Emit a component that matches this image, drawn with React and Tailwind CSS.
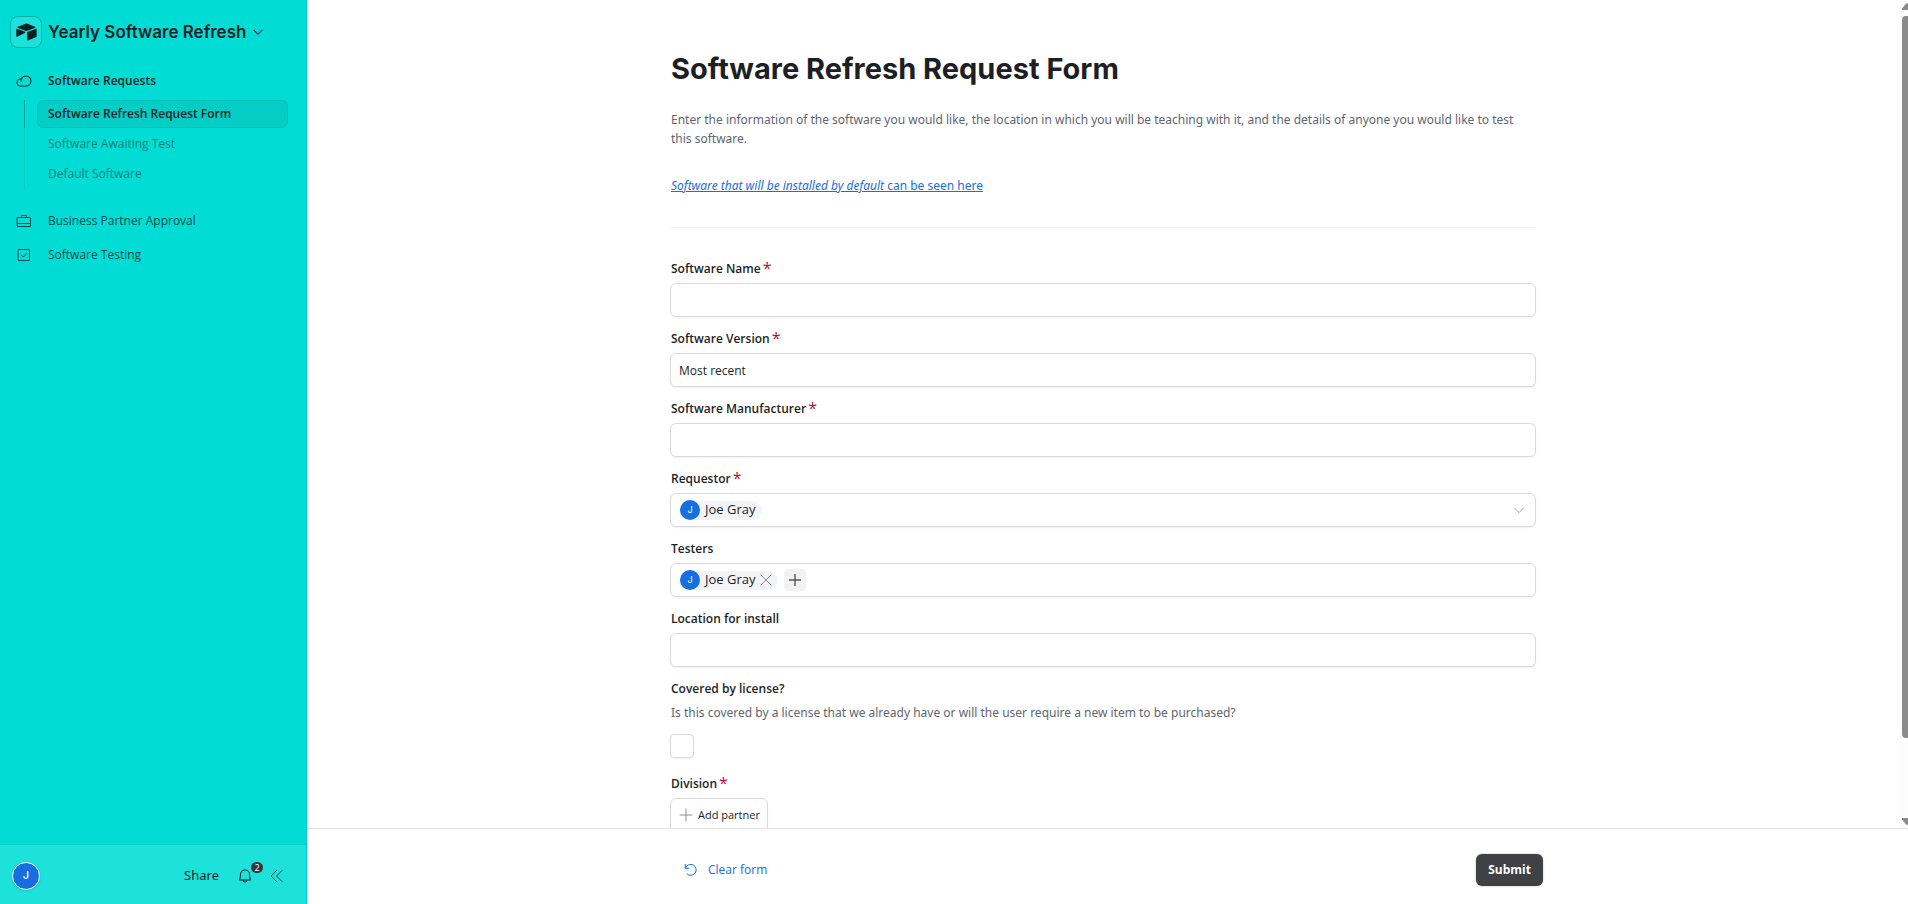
import React from "react";
import { PiBell, PiCloud } from "react-icons/pi";

const requests = ["Software Awaiting Test", "Default Software"];

function Svg({ size = 16, className = "", children, ...rest }) {
  return (
    <svg
      width={size}
      height={size}
      viewBox="0 0 16 16"
      fill="none"
      stroke="currentColor"
      strokeWidth="1"
      strokeLinecap="round"
      strokeLinejoin="round"
      aria-hidden="true"
      className={`shrink-0 ${className}`}
      {...rest}
    >
      {children}
    </svg>
  );
}

function AirtableLogo() {
  return (
    <svg width="23" height="20" viewBox="0 0 200 170" fill="currentColor" aria-hidden="true" className="shrink-0">
      <path d="M90.04 12.37 24.08 39.66c-3.67 1.52-3.63 6.73.06 8.19l66.24 26.27a24.58 24.58 0 0 0 18.12 0l66.24-26.27c3.69-1.46 3.73-6.67.06-8.19l-65.96-27.29a24.58 24.58 0 0 0-18.8 0" />
      <path d="M105.31 88.46v65.62c0 3.12 3.15 5.26 6.05 4.11l73.81-28.65a4.42 4.42 0 0 0 2.79-4.11V59.81c0-3.12-3.15-5.26-6.05-4.11l-73.81 28.65a4.42 4.42 0 0 0-2.79 4.11" />
      <path d="m88.08 91.85-21.9 10.58-2.22 1.07-46.24 22.16c-2.93 1.41-6.67-.73-6.67-3.98V60.09c0-1.18.6-2.19 1.41-2.96a5.1 5.1 0 0 1 1.12-.84c1.11-.67 2.7-.85 4.04-.31l70.12 27.78c3.56 1.41 3.84 6.4.34 8.09" />
    </svg>
  );
}

function Sidebar() {
  return (
    <aside className="flex w-[307px] shrink-0 flex-col border-r border-[#04cbc5] bg-[#01ddd5] text-[#1d1f25]">
      <button type="button" className="mt-4 ml-[10px] flex items-center self-start">
        <span className="flex size-8 items-center justify-center rounded-lg border border-[#0bb0ab] bg-[#1ce2db] text-[#04211f]">
          <AirtableLogo />
        </span>
        <span className="ml-[6px] pt-[2px] font-[Inter] text-[17px] font-semibold">Yearly Software Refresh</span>
        <Svg size={12} className="ml-[6px]">
          <path strokeWidth="1.4" d="M2.500 5.500 8 11l5.500-5.500" />
        </Svg>
      </button>

      <nav className="mt-4 flex grow flex-col text-xs">
        <a href="#requests" className="flex h-[34px] items-center gap-4 pl-4 font-semibold">
          <PiCloud size={16} aria-hidden="true" />
          Software Requests
        </a>
        <div className="mt-[2px] ml-6 flex flex-col">
          <div className="flex border-l border-[#04a09b] pr-[18px] pl-3">
            <a
              href="#form"
              className="flex h-7 grow items-center rounded-md border border-[#05c0ba] bg-[#04cdc6] pl-[10px] font-semibold"
            >
              Software Refresh Request Form
            </a>
          </div>
          <div className="flex flex-col border-l border-[#04cdc6] pt-px text-[#0b7c79]">
            {requests.map((name) => (
              <a key={name} href="#view" className="flex h-[30px] items-center pl-[23px]">
                {name}
              </a>
            ))}
          </div>
        </div>
        <a href="#approval" className="mt-4 flex h-8 items-center gap-4 pl-4 text-[#084a49]">
          <Svg>
            <path d="M1.500 4.500h13v9h-13zM5.500 4.500v-2h5v2M1.500 10.500h13" />
          </Svg>
          Business Partner Approval
        </a>
        <a href="#testing" className="mt-[2px] flex h-8 items-center gap-4 pl-4 text-[#084a49]">
          <Svg>
            <path d="M2.500 2.500h11v11h-11zM5.500 8.200l1.800 1.800 3.400-3.500" />
          </Svg>
          Software Testing
        </a>
      </nav>

      <div className="flex h-[60px] items-center border-t border-[#10cfc9] bg-[#1ce2db] pt-[2px] pr-[21px] pl-3">
        <button
          type="button"
          aria-label="Account"
          className="flex size-7 items-center justify-center rounded-full border border-white bg-[#166ee1] font-[Inter] text-[11px] font-medium text-white shadow-sm"
        >
          J
        </button>
        <button type="button" className="ml-auto font-['Noto_Sans',sans-serif] text-[13px]">
          Share
        </button>
        <button type="button" aria-label="Notifications" className="relative ml-[18px]">
          <PiBell size={16} aria-hidden="true" />
          <span className="absolute -top-[6px] left-[14px] flex h-[11px] w-3 items-center justify-center rounded-full bg-[#333840] text-[9px] leading-none text-white">
            2
          </span>
        </button>
        <button type="button" aria-label="Collapse sidebar" className="ml-4 text-[#0b4f4d]">
          <Svg>
            <path d="M7.500 2.500 2 8l5.500 5.500M13 2.500 7.500 8l5.500 5.500" />
          </Svg>
        </button>
      </div>
    </aside>
  );
}

const box =
  "h-[34px] w-full rounded-md border border-[#d9dadb] bg-white text-xs shadow-[0_1px_2px_rgba(0,0,0,0.06)]";

const prose = "pl-px font-['Noto_Sans',sans-serif] text-xs leading-[19px]";

function Label({ htmlFor, required, children }) {
  return (
    <label htmlFor={htmlFor} className="flex h-[18px] items-center pl-px text-xs leading-[18px] font-semibold">
      {children}
      {required && <span className="ml-[2px] self-start text-base leading-4 font-normal text-[#b10f41]">*</span>}
    </label>
  );
}

function Field({ id, label, required, children }) {
  return (
    <div className="flex flex-col gap-[5px]">
      <Label htmlFor={id} required={required}>
        {label}
      </Label>
      {children}
    </div>
  );
}

function Person({ name, removable }) {
  return (
    <span className="flex h-[19px] items-center rounded-full bg-[#f2f4f8] pr-[6px] text-[13px]">
      <span className="flex size-5 items-center justify-center rounded-full bg-[#166ee1] font-[Inter] text-[9px] text-white">
        {name[0]}
      </span>
      <span className="ml-[5px]">{name}</span>
      {removable && (
        <button type="button" aria-label={`Remove ${name}`} className="-mr-[2px] ml-[2px] text-[#8b8d92]">
          <Svg>
            <path d="m3 3 10 10M13 3 3 13" />
          </Svg>
        </button>
      )}
    </span>
  );
}

function Form() {
  return (
    <form id="request" className="mx-auto w-full max-w-[866px] pt-[50px] pb-48">
      <h1 className="pl-px font-[Inter] text-[29px] leading-[38px] font-bold">Software Refresh Request Form</h1>
      <p className={`${prose} mt-[22px] text-[#616670]`}>
        Enter the information of the software you would like, the location in which you will be teaching with it, and
        the details of anyone you would like to test this software.
      </p>
      <p className={`${prose} mt-7`}>
        <a href="#default" className="text-[#166ee1] underline">
          <em>Software that will be installed by default</em> can be seen here
        </a>
      </p>
      <hr className="mt-8 mr-px ml-px border-[#f0f0f0]" />

      <div className="mt-8 flex flex-col gap-[13px]">
        <Field id="name" label="Software Name" required>
          <input id="name" type="text" className={`${box} px-2`} />
        </Field>
        <Field id="version" label="Software Version" required>
          <input id="version" type="text" defaultValue="Most recent" className={`${box} px-2`} />
        </Field>
        <Field id="maker" label="Software Manufacturer" required>
          <input id="maker" type="text" className={`${box} px-2`} />
        </Field>
        <Field id="requestor" label="Requestor" required>
          <button id="requestor" type="button" className={`${box} flex items-center justify-between px-[9px]`}>
            <Person name="Joe Gray" />
            <Svg size={14} className="text-[#8b8d92]">
              <path d="m3 6 5 5 5-5" />
            </Svg>
          </button>
        </Field>
        <Field id="testers" label="Testers">
          <div className={`${box} flex items-center gap-[6px] px-[9px]`}>
            <Person name="Joe Gray" removable />
            <button
              id="testers"
              type="button"
              aria-label="Add tester"
              className="flex size-[22px] items-center justify-center rounded-sm bg-[#f2f2f2] text-[#55575c]"
            >
              <Svg>
                <path strokeWidth="1.400" strokeLinecap="butt" d="M8 2v12M2 8h12" />
              </Svg>
            </button>
          </div>
        </Field>
        <Field id="location" label="Location for install">
          <input id="location" type="text" className={`${box} px-2`} />
        </Field>
        <div className="flex flex-col">
          <Label htmlFor="license">Covered by license?</Label>
          <p id="license-hint" className={`${prose} mt-[5px] text-[#616670]`}>
            Is this covered by a license that we already have or will the user require a new item to be purchased?
          </p>
          <input
            id="license"
            type="checkbox"
            aria-describedby="license-hint"
            className="mt-3 size-6 appearance-none rounded border border-[#d9dadb] shadow-[0_1px_2px_rgba(0,0,0,0.06)]"
          />
        </div>
        <div className="mt-1 flex flex-col items-start gap-[5px]">
          <Label htmlFor="division" required>
            Division
          </Label>
          <button
            id="division"
            type="button"
            className="flex h-[34px] items-center gap-1 rounded-md border border-[#d9dadb] px-[7px] text-[11px] shadow-[0_1px_2px_rgba(0,0,0,0.06)]"
          >
            <Svg className="text-[#8b8d92]">
              <path d="M8 2v12M2 8h12" />
            </Svg>
            Add partner
          </button>
        </div>
      </div>
    </form>
  );
}

function ScrollBar() {
  return (
    <div
      aria-hidden="true"
      className="flex w-[9px] shrink-0 flex-col overflow-hidden bg-[#fcfcfc] py-[3px] pl-[3px] text-[#8b8b8b]"
    >
      <svg width="10" height="7" viewBox="0 0 10 7" fill="currentColor" className="shrink-0">
        <path d="M0 7V5.500L4 .6Q5 0 6 .6L10 5.500V7z" />
      </svg>
      <div className="mt-[6px] flex grow">
        <div className="h-[90%] w-[10px] shrink-0 rounded-[4px] bg-[#8b8b8b]" />
      </div>
      <svg width="10" height="7" viewBox="0 0 10 7" fill="currentColor" className="shrink-0">
        <path d="M0 0v1.500L4 6.400Q5 7 6 6.400L10 1.500V0z" />
      </svg>
    </div>
  );
}

export default function App() {
  return (
    <div className="flex h-screen bg-white font-['Open_Sans',sans-serif] text-[#1d1f25]">
      <Sidebar />
      <main className="flex min-w-0 grow flex-col">
        <div className="flex min-h-0 grow">
          <div className="min-w-0 grow overflow-y-auto [scrollbar-width:none]">
            <Form />
          </div>
          <ScrollBar />
        </div>
        <footer className="h-[76px] shrink-0 border-t border-[#e4e4e4] bg-white">
          <div className="mx-auto flex h-full max-w-[871px] items-center justify-between pt-[6px]">
            <button type="reset" form="request" className="ml-[11px] flex items-center gap-[9px] text-xs text-[#166ee1]">
              <Svg>
                <path d="M2.200 2.500v3.800H6M2.500 6A5.500 5.500 0 1 1 4 12" />
              </Svg>
              Clear form
            </button>
            <button
              type="submit"
              form="request"
              className="h-8 rounded-md bg-[#404145] px-3 text-xs font-bold text-white shadow-[0_0_2px_rgba(0,0,0,0.3)]"
            >
              Submit
            </button>
          </div>
        </footer>
      </main>
    </div>
  );
}
